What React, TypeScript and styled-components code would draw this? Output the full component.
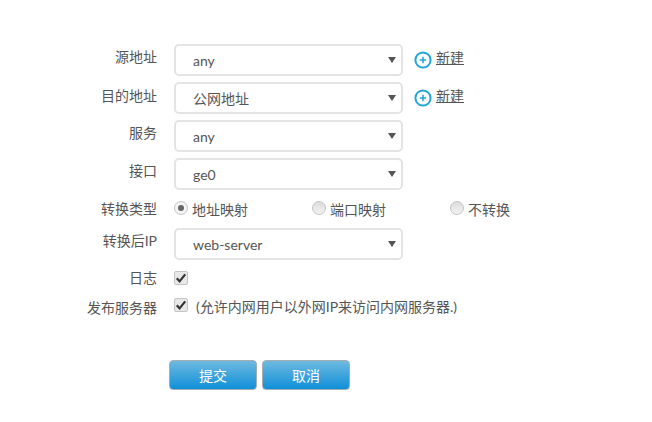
import type { FC, ReactNode } from 'react'
import { styled, createGlobalStyle } from 'styled-components'

const GlobalStyle = createGlobalStyle`
  html, body {
    margin: 0;
    padding: 0;
    background: #fff;
  }
`

const Page = styled.div`
  width: 652px;
  height: 422px;
  overflow: hidden;
  padding-top: 44px;
  box-sizing: border-box;
  font-family: Lato, 'Noto Sans CJK SC', sans-serif;
  font-size: 14px;
  color: #555;
`

const Row = styled.div<{ $height?: number; $gap?: number }>`
  display: grid;
  grid-template-columns: 157px 1fr;
  column-gap: 17px;
  align-items: center;
  height: ${(p) => p.$height ?? 32}px;
  margin-bottom: ${(p) => p.$gap ?? 6}px;
`

const Label = styled.div<{ $shift?: number }>`
  text-align: right;
  line-height: 18px;
  margin-top: ${(p) => p.$shift ?? -6}px;
  white-space: nowrap;
`

const Controls = styled.div`
  display: flex;
  align-items: center;
`

const SelectBox = styled.div`
  width: 229px;
  height: 32px;
  box-sizing: border-box;
  border: 2px solid #e4e4e4;
  border-radius: 5px;
  background: #fff;
  display: flex;
  align-items: center;
  justify-content: space-between;
  padding: 2px 5px 0 17px;
  line-height: 18px;
`

const Caret = styled.span`
  width: 0;
  height: 0;
  margin-top: -2px;
  border-left: 4px solid transparent;
  border-right: 4px solid transparent;
  border-top: 6px solid #555;
`

const AddLink = styled.a`
  display: flex;
  align-items: center;
  gap: 4px;
  margin-left: 11px;
  margin-top: -1px;
  color: #555;
  line-height: 18px;
`

const AddText = styled.span`
  margin-top: -4px;
  text-decoration: underline;
`

const RadioGroup = styled.div`
  display: grid;
  grid-template-columns: 138px 138px auto;
  margin-top: 2px;
`

const RadioItem = styled.label`
  display: flex;
  align-items: center;
  gap: 4px;
  line-height: 18px;
`

const RadioMark = styled.span<{ $checked?: boolean }>`
  width: 14px;
  height: 14px;
  box-sizing: border-box;
  border-radius: 50%;
  border: 1px solid #c4c4c4;
  background: ${(p) => (p.$checked ? '#f4f4f4' : 'linear-gradient(#dcdcdc, #f2f2f2)')};
  display: flex;
  align-items: center;
  justify-content: center;
  margin-top: -4px;

  &::after {
    content: '';
    display: ${(p) => (p.$checked ? 'block' : 'none')};
    width: 6px;
    height: 6px;
    border-radius: 50%;
    background: #666;
  }
`

const CheckMark = styled.span<{ $shift?: number }>`
  width: 14px;
  height: 14px;
  box-sizing: border-box;
  border: 1px solid #c4c4c4;
  border-radius: 2px;
  background: #e8e8e8;
  display: flex;
  align-items: center;
  justify-content: center;
  margin-top: ${(p) => p.$shift ?? 0}px;
`

const Hint = styled.span`
  margin-left: 8px;
  margin-top: 2px;
  line-height: 18px;
`

const Actions = styled.div`
  display: flex;
  gap: 5px;
  margin-left: 169px;
  margin-top: 43px;
`

const SubmitButton = styled.button`
  width: 88px;
  height: 30px;
  box-sizing: border-box;
  border: 1px solid #a6aeb4;
  border-radius: 4px;
  background: linear-gradient(#6fb9e0, #0f90d8);
  color: #fff;
  font-family: inherit;
  font-size: 14px;
  padding: 0;
`

const PlusIcon: FC = () => (
  <svg width="18" height="18" viewBox="0 0 18 18" aria-hidden="true">
    <circle cx="9" cy="9" r="7.6" fill="none" stroke="#1fa5d8" strokeWidth="2" />
    <path d="M9 5.8v6.4M5.8 9h6.4" stroke="#1fa5d8" strokeWidth="1.5" fill="none" />
  </svg>
)

const Tick: FC = () => (
  <svg width="12" height="12" viewBox="0 0 12 12" aria-hidden="true">
    <path d="M1.8 6.2 4.6 9.4 10.2 2.4" stroke="#333" strokeWidth="2.2" fill="none" />
  </svg>
)

const Select: FC<{ value: string }> = ({ value }) => (
  <SelectBox>
    <span>{value}</span>
    <Caret />
  </SelectBox>
)

const Add: FC = () => (
  <AddLink>
    <PlusIcon />
    <AddText>新建</AddText>
  </AddLink>
)

const Field: FC<{
  label: string
  height?: number
  gap?: number
  shift?: number
  children: ReactNode
}> = ({ label, height, gap, shift, children }) => (
  <Row $height={height} $gap={gap}>
    <Label $shift={shift}>{label}</Label>
    <Controls>{children}</Controls>
  </Row>
)

const App: FC = () => (
  <Page>
    <GlobalStyle />
    <Field label="源地址">
      <Select value="any" />
      <Add />
    </Field>
    <Field label="目的地址" shift={-4}>
      <Select value="公网地址" />
      <Add />
    </Field>
    <Field label="服务">
      <Select value="any" />
    </Field>
    <Field label="接口" gap={8}>
      <Select value="ge0" />
    </Field>
    <Field label="转换类型" height={22} gap={8} shift={0}>
      <RadioGroup>
        <RadioItem>
          <RadioMark $checked />
          地址映射
        </RadioItem>
        <RadioItem>
          <RadioMark />
          端口映射
        </RadioItem>
        <RadioItem>
          <RadioMark />
          不转换
        </RadioItem>
      </RadioGroup>
    </Field>
    <Field label="转换后IP" gap={6}>
      <Select value="web-server" />
    </Field>
    <Field label="日志" height={22} gap={7} shift={2}>
      <CheckMark $shift={2}>
        <Tick />
      </CheckMark>
    </Field>
    <Field label="发布服务器" height={22} gap={0} shift={4}>
      <CheckMark $shift={-2}>
        <Tick />
      </CheckMark>
      <Hint>(允许内网用户以外网IP来访问内网服务器.)</Hint>
    </Field>
    <Actions>
      <SubmitButton>提交</SubmitButton>
      <SubmitButton>取消</SubmitButton>
    </Actions>
  </Page>
)

export default App
